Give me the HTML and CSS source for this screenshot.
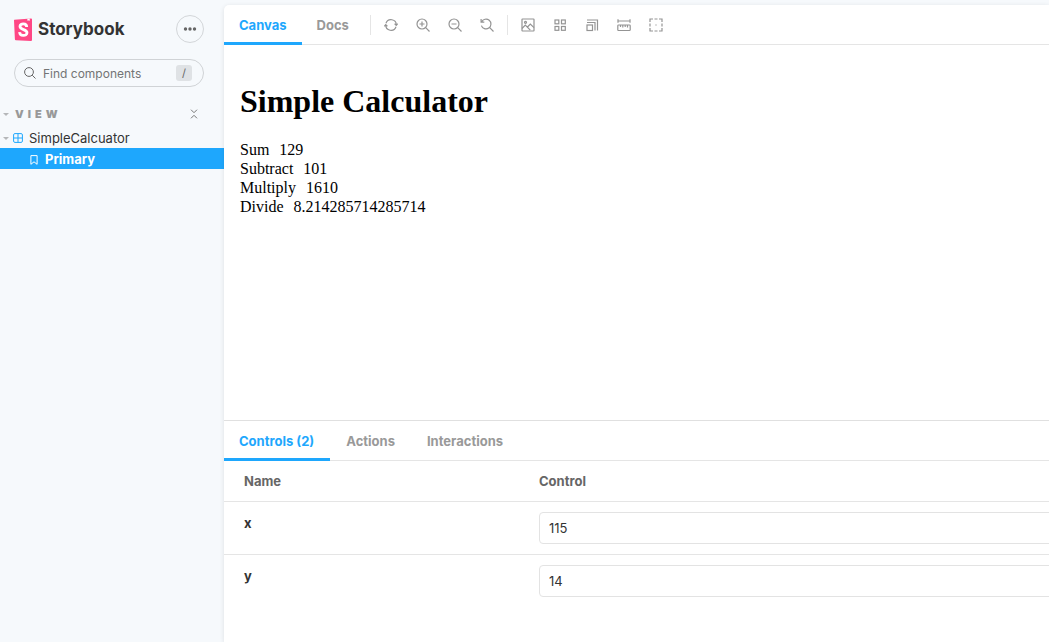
FILE: index.html
```html
<!DOCTYPE html>
<html lang="en">
<head>
<meta charset="utf-8">
<meta name="viewport" content="width=device-width, initial-scale=1">
<title>SimpleCalcuator - Primary</title>
<link rel="stylesheet" href="styles.css">
</head>
<body>
<div class="app">
  <aside class="sidebar">
    <header class="brand">
      <a class="logo" href="#">
        <svg class="logo-mark" viewBox="0 0 18 23" aria-hidden="true">
          <path fill="#ff4785" d="M.3 1.7 17 .4Q18 .3 18 1.3V22q0 1-1 1L1.900 22.300q-1 0-1-1L0 2.300Z"/>
          <path fill="#fff" d="M13.200.7 15.700.5l.1 2.500-.9-.7-1.200.8Z"/>
          <path fill="none" stroke="#fff" stroke-width="2.800" d="M12.700 8.900C12.700 5 6 5 6 8.300c0 4.100 7 2.500 7 6.500 0 3.700-7.400 3.600-7.300-.7"/>
        </svg>
        <span>Storybook</span>
      </a>
      <button class="menu-button" type="button" aria-label="Shortcuts">
        <svg class="icon" viewBox="0 0 14 14"><g fill="#666"><circle cx="2.500" cy="7" r="1.700"/><circle cx="7" cy="7" r="1.700"/><circle cx="11.500" cy="7" r="1.700"/></g></svg>
      </button>
    </header>
    <label class="search">
      <svg class="search-icon" viewBox="0 0 12 12" aria-hidden="true"><circle cx="5" cy="5" r="4.400"/><path d="m8.200 8.200 3.300 3.300"/></svg>
      <input type="text" placeholder="Find components" aria-label="Find components">
      <kbd>/</kbd>
    </label>
    <nav class="tree">
      <div class="tree-heading">
        <button class="section-toggle" type="button"><span class="caret"></span>VIEW</button>
        <button class="collapse" type="button" aria-label="Collapse all">
          <svg viewBox="0 0 8 10"><path d="m1 .7 3 3 3-3M1 9.300l3-3 3 3"/></svg>
        </button>
      </div>
      <a class="tree-item" href="#"><span class="caret"></span>
        <svg class="component-icon" viewBox="0 0 10 10"><rect x=".6" y=".6" width="8.800" height="8.800" rx="1.300"/><path d="M5 .6v8.800M.6 5h8.800"/></svg>
        <span>SimpleCalcuator</span></a>
      <a class="tree-item story selected" href="#">
        <svg class="story-icon" viewBox="0 0 8 10"><path d="M.9.600h6.200v8.700L4 6.800.9 9.300Z"/></svg>
        <span>Primary</span></a>
    </nav>
  </aside>

  <main class="main">
    <div class="toolbar">
      <button class="tab active" type="button">Canvas</button>
      <button class="tab" type="button">Docs</button>
      <div class="tools">
        <button class="tool" type="button" aria-label="Remount"><svg class="icon line" viewBox="0 0 14 14"><path d="M2 5.200A5.300 5.300 0 0 1 12.300 7M12 8.800A5.300 5.300 0 0 1 1.700 7M.2 8.300l1.500-1.600 1.700 1.500M10.600 5.800l1.700 1.500 1.500-1.600"/></svg></button>
        <button class="tool" type="button" aria-label="Zoom in"><svg class="icon line" viewBox="0 0 14 14"><circle cx="6" cy="6" r="5"/><path d="m9.700 9.700 3.800 3.800M6 3.500v5M3.500 6h5"/></svg></button>
        <button class="tool" type="button" aria-label="Zoom out"><svg class="icon line" viewBox="0 0 14 14"><circle cx="6" cy="6" r="5"/><path d="m9.700 9.700 3.800 3.800M3.500 6h5"/></svg></button>
        <button class="tool" type="button" aria-label="Reset zoom"><svg class="icon line" viewBox="0 0 14 14"><path d="M1.100 1v3.200h3.200M1.600 4A4.900 4.900 0 1 1 1.400 7.600M9.700 9.700l3.800 3.800"/></svg></button>
      </div>
      <div class="tools">
        <button class="tool" type="button" aria-label="Background"><svg class="icon line" viewBox="0 0 14 14"><rect x="1" y="1" width="12" height="12" rx=".5"/><circle cx="4.500" cy="4.300" r="1"/><path d="m1 10.500 3.300-3.300 5 5M6.500 9l2.800-3L13 9.700"/></svg></button>
        <button class="tool" type="button" aria-label="Grid"><svg class="icon line" viewBox="0 0 14 14"><rect x="2" y="2" width="3.800" height="3.800"/><rect x="8.500" y="2" width="3.800" height="3.800"/><rect x="2" y="8.500" width="3.800" height="3.800"/><rect x="8.500" y="8.500" width="3.800" height="3.800"/></svg></button>
        <button class="tool" type="button" aria-label="Viewport"><svg class="icon line" viewBox="0 0 14 14"><rect x="2" y="7" width="5.500" height="5.500"/><path d="M2 4.500h8v8M2 2h10.500v10.500"/></svg></button>
        <button class="tool" type="button" aria-label="Measure"><svg class="icon line" viewBox="0 0 14 14"><path d="M1 3h12M1 1.300v3.400M13 1.300v3.400M3.500 7v2M5.800 7v2.600M8.200 7v2M10.500 7v2.600"/><rect x=".8" y="7" width="12.400" height="5.500" rx=".8"/></svg></button>
        <button class="tool" type="button" aria-label="Outline"><svg class="icon line" viewBox="0 0 14 14"><path d="M1 4V1h3M10 1h3v3M13 10v3h-3M4 13H1v-3M5.500 1h3M5.500 13h3M1 5.500v3M13 5.500v3M6.400 7h1.200"/></svg></button>
      </div>
    </div>

    <section class="preview">
      <h1>Simple Calculator</h1>
      <div class="result"><span>Sum</span><span>129</span></div>
      <div class="result"><span>Subtract</span><span>101</span></div>
      <div class="result"><span>Multiply</span><span>1610</span></div>
      <div class="result"><span>Divide</span><span>8.214285714285714</span></div>
    </section>

    <section class="panel">
      <div class="panel-tabs">
        <button class="tab active" type="button">Controls (2)</button>
        <button class="tab" type="button">Actions</button>
        <button class="tab" type="button">Interactions</button>
      </div>
      <table class="controls">
        <thead><tr><th scope="col">Name</th><th scope="col">Control</th></tr></thead>
        <tbody>
          <tr><th scope="row"><label for="arg-x">x</label></th><td><input id="arg-x" type="text" inputmode="numeric" value="115"></td></tr>
          <tr><th scope="row"><label for="arg-y">y</label></th><td><input id="arg-y" type="text" inputmode="numeric" value="14"></td></tr>
        </tbody>
      </table>
    </section>
  </main>
</div>
</body>
</html>
```
FILE: styles.css
```css
* { box-sizing: border-box; }

body {
  margin: 0;
  background: #f6f9fc;
  color: #333;
  font-family: Inter, "Liberation Sans", sans-serif;
  font-size: 13px;
}

button, input { font: inherit; color: inherit; }
button { border: 0; padding: 0; background: none; cursor: pointer; }
a { color: inherit; text-decoration: none; }
svg { display: block; flex: none; }

.app { display: flex; min-height: 100vh; overflow: hidden; }
.icon { width: 14px; height: 14px; }
.line { fill: none; stroke: #949494; stroke-width: 1.2; }

/* Sidebar */
.sidebar { flex: 0 0 224px; min-width: 0; padding-top: 15px; }
.brand { display: flex; align-items: center; justify-content: space-between; padding: 0 20px 0 14px; }
.logo {
  display: flex;
  align-items: center;
  gap: 6px;
  font-size: 17px;
  font-weight: 700;
}
.logo-mark { width: 18px; height: 23px; }
.menu-button {
  display: flex;
  align-items: center;
  justify-content: center;
  width: 28px;
  height: 28px;
  border: 1px solid #d3d6d9;
  border-radius: 50%;
}

.search {
  display: flex;
  align-items: center;
  height: 28px;
  margin: 16px 20px 0 14px;
  padding: 0 11px 0 9px;
  border: 1px solid #d0d3d6;
  border-radius: 14px;
}
.search-icon { width: 12px; height: 12px; fill: none; stroke: #666; }
.search input {
  flex: 1;
  width: 0;
  min-width: 0;
  padding: 0;
  margin-left: 7px;
  border: 0;
  outline: 0;
  background: none;
  font-size: 12px;
}
.search input::placeholder { color: #737475; opacity: 1; }
.search kbd {
  width: 16px;
  border-radius: 3px;
  background: #dfe2e5;
  color: #666;
  font: 11px/16px Inter, sans-serif;
  text-align: center;
}

.tree { margin-top: 17px; }
.tree-heading { display: flex; align-items: center; justify-content: space-between; height: 20px; margin-bottom: 4px; padding-right: 25px; }
.section-toggle {
  display: flex;
  align-items: center;
  gap: 6px;
  padding-left: 3px;
  color: #999;
  font-size: 11px;
  font-weight: 900;
  letter-spacing: 4px;
}
.caret { flex: none; border: 3px solid transparent; border-top-color: #b5b7b9; border-bottom: 0; }
.collapse svg { width: 10px; height: 10px; fill: none; stroke: #777; }
.tree-item { display: flex; align-items: center; height: 20px; padding-left: 3px; }
.component-icon { width: 10px; height: 10px; margin: 0 6px 0 4px; fill: none; stroke: #1ea7fd; }
.story { height: 21px; padding-left: 30px; }
.story-icon { width: 8px; height: 10px; margin: 2px 7px 0 0; fill: none; stroke: #fff; }
.selected { background: #1ea7fd; color: #fff; font-weight: 700; }

/* Main area */
.main {
  display: flex;
  flex: 1;
  flex-direction: column;
  min-width: 0;
  margin-top: 5px;
  border-top-left-radius: 5px;
  background: #fff;
  box-shadow: 0 1px 5px rgba(0, 0, 0, 0.1);
}
.toolbar, .panel-tabs { display: flex; height: 40px; border-bottom: 1px solid #e5e5e5; }
.tab {
  height: 40px;
  padding: 3px 15px 0;
  border-bottom: 3px solid transparent;
  color: #999;
  font-weight: 700;
}
.tab.active { border-bottom-color: #1ea7fd; color: #1ea7fd; }
.tools { display: flex; align-items: center; gap: 4px; }
.tools::before { content: ""; width: 1px; height: 20px; margin: 0 2px 0 6px; background: #e5e5e5; }
.tool { display: flex; align-items: center; justify-content: center; width: 28px; height: 28px; }

.preview {
  flex: 1;
  padding: 16px;
  color: #000;
  font: 16px/normal "Liberation Serif", "Times New Roman", serif;
}
.preview h1 { margin: 21px 0 20px; font-size: 32px; line-height: 38px; }
.result { display: flex; gap: 10px; line-height: 19px; }

.panel { flex: 0 0 222px; border-top: 1px solid #e0e0e0; }
.panel-tabs .tab { padding: 3px 16px 0; }
.panel-tabs .tab:first-child { padding-left: 15px; }
.controls { width: 100%; border-collapse: collapse; table-layout: fixed; text-align: left; }
.controls th { padding: 0 20px; vertical-align: top; font-weight: 700; }
.controls thead th { height: 40px; color: #666; vertical-align: middle; }
.controls th:first-child { width: 36%; }
.controls thead tr, .controls tbody tr:first-child { border-bottom: 1px solid #e5e5e5; }
.controls th + th { padding-left: 18px; }
.controls tbody th { padding-top: 13px; }
.controls td { padding: 10px 0 10px 18px; }
.controls input {
  display: block;
  width: calc(100% + 20px);
  height: 32px;
  padding: 0 9px;
  border: 1px solid #e3e3e3;
  border-radius: 4px;
  outline: 0;
  background: #fff;
}
```
